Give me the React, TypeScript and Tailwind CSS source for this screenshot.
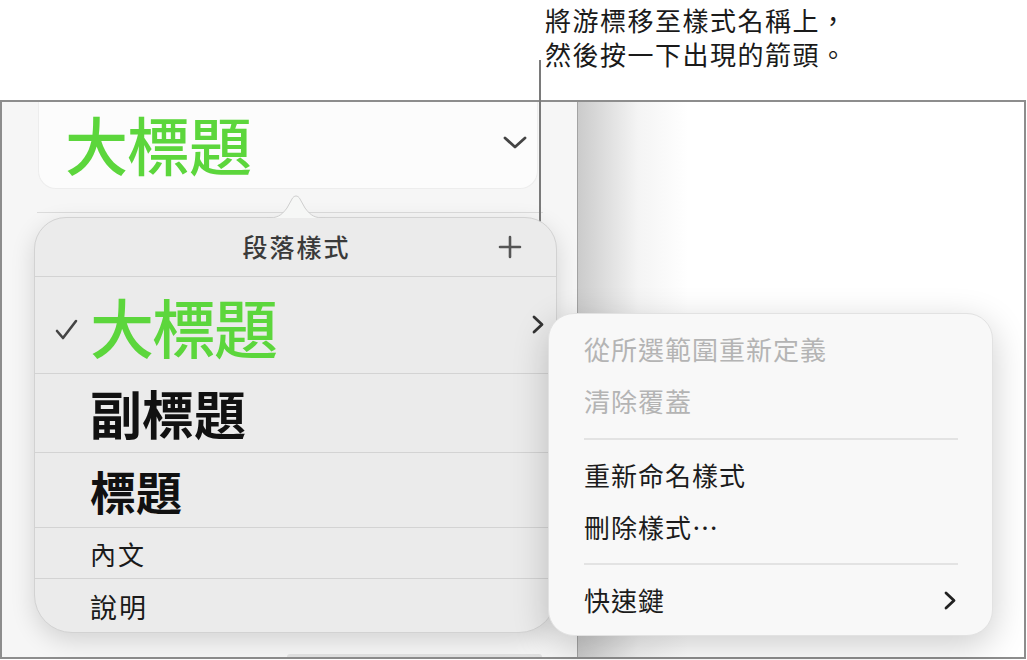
import React from 'react';

// Paragraph style popover with the style's action menu (Pages-like sidebar)

function Check() {
  return (
    <svg width="23" height="21" viewBox="0 0 23 21" fill="none">
      <path d="M2 12 L8 19 L21 2" stroke="#444" strokeWidth="2.6" strokeLinecap="round" strokeLinejoin="round" />
    </svg>
  );
}

function ChevronRight({ color = '#333' }: { color?: string }) {
  return (
    <svg width="12" height="19" viewBox="0 0 12 19" fill="none">
      <path d="M2 2 L10 9.5 L2 17" stroke={color} strokeWidth="2.8" strokeLinecap="round" strokeLinejoin="round" />
    </svg>
  );
}

function ChevronDown() {
  return (
    <svg width="24" height="13" viewBox="0 0 24 13" fill="none">
      <path d="M2 2 L12 11 L22 2" stroke="#444" strokeWidth="2.8" strokeLinecap="round" strokeLinejoin="round" />
    </svg>
  );
}

function Plus() {
  return (
    <svg width="24" height="24" viewBox="0 0 24 24" fill="none">
      <path d="M12 2 V22 M2 12 H22" stroke="#555" strokeWidth="2.6" strokeLinecap="round" />
    </svg>
  );
}

export default function App() {
  const menuItem = 'h-[52px] flex items-center justify-between';

  return (
    <div className="relative w-[1027px] h-[660px] overflow-hidden bg-white font-['Noto_Sans_CJK_TC','Noto_Sans',sans-serif]">
      {/* 說明文字 */}
      <div className="h-[100px] pl-[545px] pt-[3px] text-[26px] leading-[34px] tracking-[1.5px] text-[#1a1a1a]">
        將游標移至樣式名稱上，
        <br />
        然後按一下出現的箭頭。
      </div>

      {/* 截圖外框 */}
      <div className="flex w-[1026px] h-[559px] border-2 border-[#8d8d8d]">
        {/* 側邊欄 */}
        <div className="flex flex-col w-[576px] shrink-0 bg-[#f6f6f6] border-r border-[#a3a3a3]">
          <div className="ml-[36px] w-[500px] h-[87px] shrink-0 rounded-b-[18px] bg-[#fcfcfc] border-x border-b border-[#ededed] flex items-center justify-between pl-[26px] pr-[10px] pb-[6px]">
            <span className="text-[63px] leading-[1.1] tracking-[-1px] font-medium text-[#5cd63c] pt-[2px]">大標題</span>
            <ChevronDown />
          </div>
          <div className="mt-[23px] ml-[35px] w-[506px] h-px bg-[#dcdcdc]" />
          <div className="mt-auto ml-[285px] w-[255px] h-[3px] rounded-t bg-[#e2e2e2]" />
        </div>
        {/* 畫布 */}
        <div className="flex-1 bg-[linear-gradient(to_right,#cbcbcb,#f4f4f4_60px,#ffffff_110px)]" />
      </div>

      {/* 指示線 */}
      <div className="absolute left-[539px] top-[60px] w-[2px] h-[258px] bg-[#7a7a7a]" />

      {/* 段落樣式 popover */}
      <div className="absolute left-[34px] top-[194px] w-[523px]">
        <svg className="ml-[233px] block" width="58" height="24" viewBox="0 0 58 24">
          <path d="M0 24 C10 24 14 22 20 14 L25 5 C27 1 31 1 33 5 L38 14 C44 22 48 24 58 24" fill="#f6f7f6" stroke="#cfcfcf" strokeWidth="1" />
        </svg>
        <div className="mt-[-1px] h-[416px] rounded-t-[32px] rounded-b-[38px] bg-[#ebebeb] border border-[#d2d2d2] shadow-[0_8px_24px_rgba(0,0,0,0.14)] flex flex-col overflow-hidden">
          <div className="h-[59px] shrink-0 grid grid-cols-[1fr_auto_1fr] items-center border-b border-[#d3d3d3]">
            <span />
            <span className="text-[25px] tracking-[2px] font-medium text-[#3a3a3a] pl-[2px]">段落樣式</span>
            <span className="flex justify-end pr-[34px]">
              <Plus />
            </span>
          </div>
          <div className="h-[97px] shrink-0 flex items-center pl-[20px] pr-[12px] border-b border-[#d3d3d3]">
            <span className="w-[35px] shrink-0 pt-[8px]">
              <Check />
            </span>
            <span className="flex-1 text-[64px] leading-none tracking-[-2px] font-medium text-[#5cd63c]">大標題</span>
            <span className="mb-[2px]">
              <ChevronRight />
            </span>
          </div>
          <div className="h-[79px] shrink-0 flex items-center pl-[55px] border-b border-[#d3d3d3]">
            <span className="text-[52px] leading-none font-bold text-[#111]">副標題</span>
          </div>
          <div className="h-[75px] shrink-0 flex items-center pl-[55px] border-b border-[#d3d3d3]">
            <span className="text-[46px] leading-none font-bold text-[#111]">標題</span>
          </div>
          <div className="h-[51px] shrink-0 flex items-center pl-[55px] border-b border-[#d3d3d3]">
            <span className="text-[26px] leading-none tracking-[2px] text-[#1a1a1a] pt-[2px]">內文</span>
          </div>
          <div className="flex-1 flex items-center pl-[55px]">
            <span className="text-[27px] leading-none tracking-[2px] text-[#1a1a1a] pt-[1px]">說明</span>
          </div>
        </div>
      </div>

      {/* 樣式操作選單 */}
      <div className="absolute left-[548px] top-[313px] w-[445px] h-[323px] rounded-[26px] bg-[#f8f8f8] border border-[#e2e2e2] shadow-[0_10px_36px_rgba(0,0,0,0.2)] pt-[8px] pl-[35px] pr-[34px] text-[26px] tracking-[1px]">
        <div className={`${menuItem} text-[#b4b4b4]`}>從所選範圍重新定義</div>
        <div className={`${menuItem} text-[#b4b4b4]`}>清除覆蓋</div>
        <div className="pt-[12px] pb-[8px]">
          <div className="h-[2px] bg-[#e3e3e3]" />
        </div>
        <div className={`${menuItem} text-[#1c1c1c]`}>重新命名樣式</div>
        <div className={`${menuItem} text-[#1c1c1c]`}>刪除樣式⋯</div>
        <div className="pt-[11px] pb-[8px]">
          <div className="h-[2px] bg-[#e3e3e3]" />
        </div>
        <div className={`${menuItem} text-[#1c1c1c]`}>
          <span>快速鍵</span>
          <span className="pr-[2px] pt-[2px]">
            <ChevronRight color="#222" />
          </span>
        </div>
      </div>
    </div>
  );
}
